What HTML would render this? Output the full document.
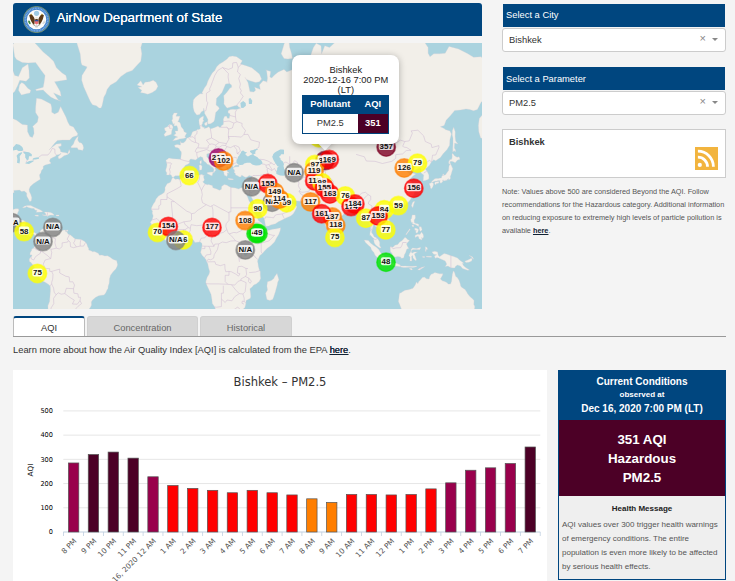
<!DOCTYPE html>
<html><head><meta charset="utf-8"><title>AirNow Department of State</title>
<style>
*{box-sizing:border-box;margin:0;padding:0}
html,body{width:735px;height:581px;overflow:hidden;background:#f4f4f4;font-family:"Liberation Sans",Arial,sans-serif;color:#333}
.abs{position:absolute}
#hdr{left:13px;top:3px;width:469px;height:33px;background:#00467f;border-radius:3px 3px 0 0}
#hdr .t{position:absolute;left:43.5px;top:5.5px;font-size:13.33px;color:#fff;white-space:nowrap;line-height:17px;text-shadow:0 0 0.5px #fff}
#map{left:13px;top:43px;width:469px;height:266px;background:#aad3df;overflow:hidden}
.ml{font:bold 7.9px "Liberation Sans",Arial,sans-serif;fill:#111}
.ax{font:6.6px "DejaVu Sans","Liberation Sans",sans-serif;fill:#000}
.xl{font:7.4px "DejaVu Sans","Liberation Sans",sans-serif;fill:#555}
.ay{font:7.3px "DejaVu Sans","Liberation Sans",sans-serif;fill:#222}
.ct{font:11.55px "DejaVu Sans","Liberation Sans",sans-serif;fill:#333}
#pop{left:279.3px;top:12px;width:107px;height:89px;background:#fff;border-radius:8px;box-shadow:0 1.5px 7px rgba(0,0,0,.28)}
#tip{left:305.5px;top:92.5px;width:12px;height:12px;background:#fff;transform:rotate(45deg);box-shadow:0 1.5px 7px rgba(0,0,0,.25)}
#poptxt{left:279.3px;top:21.5px;width:107px;text-align:center;font-size:9.33px;line-height:10.1px;color:#222}
#ptab{left:288.8px;top:52px;width:87.2px;height:38.6px;border:1px solid #00467f;background:#fff}
.hdbar{background:#00467f;color:#fff;font-size:9.33px;line-height:24.2px;padding-left:3.6px}
.sel{background:#fff;border:1px solid #ccc;border-radius:3px;font-size:9.33px;line-height:22px;padding-left:6px;color:#333}
.tab{top:316px;height:20px;font-size:9.33px;text-align:center;line-height:22px;color:#666;background:#d7d7d7;border:1px solid #d0d0d0;border-bottom:none;border-radius:3px 3px 0 0}
</style></head><body>
<div id="hdr" class="abs">
<svg class="abs" style="left:10px;top:3px" width="27" height="27" viewBox="0 0 27 27">
<circle cx="13.55" cy="13.55" r="13.1" fill="#4382cb" stroke="#9aa456" stroke-width="0.7"/>
<circle cx="13.55" cy="13.55" r="11.3" fill="none" stroke="#7fb0e6" stroke-width="1.6" stroke-dasharray="0.9 0.7"/>
<circle cx="13.55" cy="13.55" r="9.7" fill="#fdfdfb"/>
<circle cx="13.55" cy="7.3" r="2.6" fill="#9fcbe3"/>
<path d="M7.3 8.9 L8.2 7.4 L9.2 8.9Z M17.9 8.9 L18.9 7.4 L19.8 8.9Z" fill="#c9b037"/>
<path d="M6.2 9.3 L7.5 8.6 L9.3 9.1 L11.1 11.4 L11.9 14 L11.6 16 L11.4 18.4 L10.1 18.2 L8.6 16 L7.3 13.2Z" fill="#5c3a17"/>
<path d="M20.9 9.3 L19.6 8.6 L17.8 9.1 L16 11.4 L15.2 14 L15.5 16 L15.7 18.4 L17 18.2 L18.5 16 L19.8 13.2Z" fill="#5c3a17"/>
<path d="M12.3 11.2 Q13.55 10.2 14.8 11.2 L15.2 14 H11.9Z" fill="#efe9dc"/>
<path d="M11.9 13.4 Q13.55 12.6 15.2 13.4 V14.2 H11.9Z" fill="#4a2f14"/>
<path d="M11.8 14 H15.3 V16.6 Q15.3 18 13.55 18.6 Q11.8 18 11.8 16.6Z" fill="#ea6a72"/>
<rect x="11.8" y="14" width="3.5" height="1.3" fill="#2c4f9e"/>
<ellipse cx="6.4" cy="16.4" rx="1" ry="2" transform="rotate(-25 6.4 16.4)" fill="#3f8a3f"/>
<path d="M19.6 17.6 L21.6 14.6 M20.4 18 L22 15.6" stroke="#b9b9b9" stroke-width="0.6" fill="none"/>
<path d="M10.4 18.6 L11.4 19.6 M16.7 18.6 L15.7 19.6" stroke="#5c3a17" stroke-width="0.9"/>
<path d="M11.6 19.6 Q13.55 18.8 15.5 19.6 L14.6 21.6 H12.5Z" fill="#c9c9c9"/>
</svg>
<div class="t">AirNow Department of State</div>
</div>

<div id="map" class="abs">
<svg class="abs" style="left:0;top:0" width="469" height="266" viewBox="0 0 469 266">
<path d="M-19.1,29.9 -11.5,28.9 -9.6,7.7 -4.0,19.4 -0.2,27.4 1.7,32.4 5.5,33.4 9.3,24.8 15.0,21.0 16.0,27.4 16.3,34.9 13.1,38.2 6.8,37.3 4.6,42.8 1.7,48.6 -1.1,50.7 -4.9,54.9 -7.8,60.9 -9.1,64.7 -8.1,69.2 -4.9,75.6 -0.2,75.6 3.6,77.3 9.3,81.4 14.4,82.1 14.6,88.8 16.9,93.5 19.4,94.4 21.1,90.4 20.7,85.6 19.7,83.4 24.5,79.0 25.4,73.9 22.6,69.6 22.6,64.7 23.5,55.3 28.3,56.1 34.0,58.9 37.8,60.9 38.7,64.7 38.7,69.2 41.6,71.0 45.3,69.2 47.6,63.6 51.0,70.3 52.9,73.9 54.8,79.0 56.7,82.4 60.5,84.0 62.4,87.2 64.7,90.4 64.3,92.5 59.6,94.1 56.7,97.1 49.1,97.1 44.4,97.4 41.6,100.3 37.8,105.1 35.9,107.1 39.7,103.7 43.4,100.9 48.2,100.6 48.2,103.1 45.3,103.7 47.2,106.5 47.6,108.7 49.5,109.3 52.9,109.8 54.8,110.6 56.2,106.5 57.1,109.3 54.8,111.4 51.0,112.8 48.2,114.9 45.9,115.9 45.0,113.8 47.6,111.2 48.2,110.1 46.3,111.4 43.4,112.0 42.5,113.3 39.7,114.6 37.4,115.7 36.4,118.0 37.8,119.8 37.8,120.5 34.9,121.3 32.1,122.1 30.2,123.3 30.2,125.5 28.3,127.7 27.9,129.7 26.4,132.1 27.0,134.9 27.3,136.3 24.5,137.9 22.6,139.3 20.3,140.8 17.3,143.5 16.1,146.2 16.3,148.4 17.8,151.4 18.8,154.8 18.2,158.0 16.7,158.4 15.4,156.1 13.7,152.9 13.7,150.1 11.2,148.0 8.7,148.6 6.5,147.1 3.6,147.3 0.8,147.5 1.2,149.7 -1.1,149.7 -4.0,148.8 -7.8,148.8 -9.6,149.9 -13.4,152.3 -14.0,156.5 -14.8,160.7 -15.0,164.2 -13.8,167.5 -11.9,170.5 -9.6,171.7 -8.3,172.5 -4.9,171.7 -2.6,171.3 -1.3,169.3 -0.9,166.8 2.7,165.8 5.3,165.8 5.9,167.3 4.6,169.9 4.0,172.3 3.1,173.9 2.1,176.8 3.2,177.4 7.4,177.0 10.3,177.2 12.7,178.8 12.2,182.7 11.8,186.2 13.1,188.5 14.6,190.0 16.9,190.8 19.2,189.4 21.6,189.6 23.7,191.0 22.8,193.8 21.8,192.1 19.7,190.6 18.2,191.7 18.8,193.5 16.9,193.8 15.6,192.3 13.3,191.9 11.8,191.2 9.3,188.5 7.8,186.8 6.1,184.6 4.6,182.7 2.7,182.3 -0.2,181.3 -3.0,180.7 -5.9,177.8 -8.7,176.4 -11.5,177.4 -15.3,176.4 -19.1,174.9ZM47.8,58.1 45.3,56.9 40.6,49.9 48.2,53.3 47.2,48.6 41.6,38.7 53.9,36.8 52.9,32.4 49.1,29.9 43.4,24.8 40.6,18.3 35.9,13.7 30.2,9.0 24.5,2.7 18.8,-3.2 11.2,-3.2 3.6,-3.8 -0.2,1.5 1.7,13.7 3.6,16.6 9.3,19.4 15.0,19.9 22.6,19.4 28.3,27.4 32.1,32.4 31.1,39.6 30.2,44.2 22.6,46.4 23.5,47.7 26.4,47.3 30.2,46.9 34.0,50.7 37.8,54.1 41.6,56.1 45.3,57.3ZM5.5,47.3 8.4,52.0 13.1,50.7 16.9,49.9 17.8,47.3 15.0,45.5 11.2,41.0 8.7,39.6 6.5,41.9ZM-10.6,7.7 -0.7,6.5 -0.2,-3.8 -10.6,-5.2ZM65.3,93.2 63.4,95.0 61.5,97.9 60.5,100.9 58.0,103.7 58.2,104.8 61.5,104.8 64.3,104.8 65.3,106.8 68.1,107.1 69.6,107.6 70.6,105.1 70.0,102.3 68.5,100.0 66.2,99.4 64.7,97.1ZM66.2,-19.8 60.5,-16.0 64.3,1.5 67.2,10.8 68.1,19.4 69.0,22.1 73.8,23.7 73.8,24.8 69.0,32.4 68.7,37.3 70.9,44.2 72.5,47.7 75.7,54.9 77.6,58.9 79.5,61.7 83.3,62.8 86.1,65.1 88.0,65.1 89.0,62.8 89.9,58.9 90.9,54.1 92.8,50.7 94.1,46.4 97.5,41.9 99.4,41.0 103.2,38.7 107.9,33.4 113.6,29.4 119.3,27.4 123.1,23.2 127.8,18.3 128.8,10.8 127.8,4.6 129.7,-1.8 132.6,-12.3 134.5,-28.0ZM124.0,41.9 127.8,37.8 130.1,41.9 132.0,39.2 136.4,38.7 140.2,37.3 143.0,39.2 144.9,43.3 143.0,46.9 139.2,49.5 134.8,51.2 131.6,50.3 127.5,49.5 128.8,47.3 125.0,44.6 128.8,43.8ZM159.7,97.8 163.9,97.1 166.7,95.9 170.5,95.6 173.2,94.4 171.8,93.5 173.7,90.1 171.1,88.8 170.5,86.6 168.2,83.7 167.5,80.7 166.3,79.0 164.8,79.0 165.8,77.0 166.7,73.9 167.1,73.2 162.9,73.2 164.4,69.9 161.0,69.9 159.5,72.8 159.7,76.3 158.7,77.0 160.1,81.1 159.7,81.4 161.4,80.4 161.0,83.0 163.9,82.7 164.8,85.6 164.8,87.9 162.0,87.9 162.5,89.4 162.9,90.7 160.6,92.2 163.9,93.8 164.8,94.1 162.5,94.7ZM158.4,91.3 158.7,87.9 160.1,84.0 158.7,81.7 156.3,81.4 154.4,83.7 151.5,85.0 151.9,87.6 153.4,88.5 151.0,91.6 151.9,93.5 154.8,92.5ZM219.4,13.1 223.6,13.7 229.3,17.7 227.4,21.0 233.1,22.7 238.8,24.8 246.4,31.0 248.6,35.9 246.4,38.7 242.6,39.6 236.9,37.8 233.1,36.3 232.1,34.4 235.0,39.6 236.5,46.4 236.9,48.6 240.7,49.0 242.6,47.3 241.6,44.2 246.4,46.0 247.3,46.4 246.4,41.9 250.1,37.8 253.9,38.7 253.9,39.6 254.5,34.9 253.6,27.4 252.6,26.9 257.7,28.4 256.8,33.9 258.7,34.9 261.5,32.0 265.3,28.9 271.0,26.4 273.8,28.9 278.6,26.9 282.4,25.3 285.2,20.5 286.2,23.2 292.8,25.3 295.7,25.3 297.6,22.1 297.6,25.8 300.4,28.4 301.3,24.8 297.6,19.4 297.2,13.7 300.4,4.6 303.2,0.2 308.0,2.7 308.6,10.8 311.8,2.7 316.5,4.6 323.2,-1.8 331.7,-12.3 360.1,-36.7 384.8,-5.2 384.8,-1.8 394.3,-0.5 403.7,-1.8 411.3,-1.2 415.1,4.6 415.1,10.2 417.0,13.7 420.8,10.8 426.5,10.8 432.2,10.2 436.0,3.4 445.5,5.9 454.9,10.8 460.6,14.3 468.2,13.7 473.9,21.0 483.4,44.2 483.4,97.9 467.7,95.0 465.8,88.8 465.4,82.4 466.3,75.6 469.2,72.1 473.9,64.7 479.6,58.9 473.9,57.7 468.2,58.9 464.4,66.6 460.6,67.7 456.8,66.6 453.0,65.9 447.4,67.0 441.7,67.4 436.9,73.2 433.1,77.3 431.2,82.4 427.4,83.7 431.2,85.6 432.2,86.6 436.9,87.9 438.4,91.0 436.9,96.5 436.6,102.3 434.1,106.5 430.3,110.6 427.4,114.6 422.7,117.7 420.8,116.7 418.3,119.0 416.5,122.3 413.8,124.8 412.3,126.0 414.2,128.5 415.9,132.1 415.9,135.6 415.1,136.5 412.3,137.4 410.2,137.9 410.4,134.4 410.8,132.1 408.1,130.1 407.5,128.0 408.3,126.0 406.4,124.8 401.8,127.3 401.1,127.5 400.9,125.5 401.8,123.3 400.0,122.6 397.1,125.3 394.3,126.8 393.7,128.5 395.8,130.1 396.2,131.6 399.4,130.1 402.8,131.1 400.0,133.0 398.6,134.4 396.7,136.7 398.6,139.0 399.8,142.0 401.7,144.2 401.7,146.0 400.0,146.6 399.8,147.3 401.8,148.2 401.1,151.2 399.2,153.4 397.5,156.5 396.2,158.2 394.3,159.9 391.8,162.2 387.2,163.8 385.7,164.4 382.5,165.6 379.9,166.2 379.5,168.3 378.7,166.0 376.2,165.4 374.4,166.2 372.8,167.9 371.1,170.3 371.1,171.9 372.8,174.3 375.9,176.8 377.6,179.8 378.0,183.1 377.6,185.4 375.3,186.9 373.4,187.7 372.8,189.4 370.0,191.0 369.2,191.2 369.6,188.5 368.3,187.5 366.8,187.3 365.6,185.2 364.3,184.2 362.0,183.3 361.8,181.9 361.1,181.7 360.1,182.3 360.1,184.6 359.2,186.6 358.6,188.5 358.8,190.0 360.1,191.4 361.1,193.8 363.0,194.6 364.5,195.7 366.2,198.0 366.8,199.9 366.6,202.2 368.1,204.9 366.8,205.0 364.9,203.7 362.6,202.0 361.3,199.9 360.7,197.1 360.7,195.4 359.6,194.6 357.3,191.9 356.9,192.5 356.9,190.4 357.5,187.5 357.7,184.6 356.7,181.7 356.3,179.8 355.8,176.8 354.8,175.4 354.1,174.5 352.5,175.8 351.2,177.2 349.3,176.8 349.7,173.9 349.1,171.3 347.8,169.3 346.5,168.3 345.5,166.8 344.6,164.2 343.1,163.6 342.1,164.6 339.6,165.2 337.8,165.4 335.5,166.0 335.1,167.7 334.3,168.9 332.1,169.7 329.8,171.9 326.6,174.9 324.5,176.4 322.6,177.4 322.2,179.8 322.8,182.3 321.8,185.0 322.0,187.9 320.9,188.1 320.1,189.8 318.8,190.8 317.5,192.1 315.6,190.4 315.0,188.5 314.0,185.6 312.3,182.7 311.6,179.8 310.4,177.8 309.3,174.9 308.6,170.9 308.4,167.9 308.2,165.8 307.6,166.8 305.1,167.3 303.2,166.8 301.3,164.2 303.8,163.0 301.2,162.2 299.8,161.3 298.1,159.7 296.8,157.8 292.8,158.0 288.1,158.2 284.3,158.0 281.4,157.4 279.2,156.5 278.2,154.4 277.3,154.0 274.8,155.1 272.0,154.8 270.1,153.4 267.2,151.2 266.3,148.4 264.4,147.5 263.0,147.3 261.5,148.4 261.5,149.5 262.8,152.3 264.9,154.8 265.7,155.9 266.3,157.8 266.8,159.0 267.6,156.5 268.3,158.6 267.8,160.1 270.1,160.3 272.9,160.3 275.4,158.0 277.1,156.1 277.5,158.6 278.0,160.1 281.6,161.5 283.9,163.8 282.0,167.9 280.1,170.9 277.6,172.9 275.4,173.9 272.9,174.9 269.5,176.8 265.3,178.8 262.5,180.7 257.7,181.9 255.8,183.1 253.0,183.3 252.4,182.1 252.0,179.8 251.7,177.8 251.3,175.8 249.2,172.9 247.9,169.9 244.8,166.2 243.5,162.8 241.2,159.7 239.7,156.5 237.4,152.3 236.7,152.1 236.9,149.0 235.7,152.3 233.6,151.2 232.3,148.2 233.1,151.2 234.6,154.0 235.9,157.6 237.8,160.7 238.2,162.8 240.7,166.8 241.2,169.7 243.5,172.9 245.4,177.6 248.2,179.8 251.1,182.7 252.6,183.7 252.4,185.6 253.9,187.5 256.8,187.1 259.6,186.2 263.4,185.8 267.6,184.8 267.2,187.5 265.7,191.4 263.4,195.2 261.5,199.0 257.7,202.8 256.4,203.7 253.9,205.6 251.1,208.4 249.2,210.7 246.9,212.6 245.8,215.1 244.5,217.9 245.0,220.4 245.4,223.6 246.4,227.1 247.3,228.4 247.3,232.3 247.7,235.2 246.4,238.2 243.5,240.7 240.7,242.1 239.1,244.1 236.9,245.7 237.4,249.2 237.8,253.3 237.4,255.3 233.1,257.4 232.9,260.6 231.9,264.4 229.3,267.0 227.4,270.3 227.4,278.3 202.7,278.3 202.7,267.0 201.8,264.0 199.3,260.6 198.9,256.4 198.0,251.2 196.1,247.1 194.2,243.1 192.9,240.1 192.9,238.2 194.2,234.3 196.1,231.1 196.7,228.4 195.5,224.6 194.8,220.8 193.8,218.9 192.9,216.4 191.4,214.7 189.1,212.2 187.6,209.4 188.3,206.7 188.7,204.7 189.1,202.2 188.9,200.3 187.2,199.0 186.2,199.0 183.8,199.2 181.9,199.4 180.4,197.1 178.8,195.6 176.9,195.4 174.3,195.6 172.8,195.9 170.5,196.9 166.7,198.4 164.8,197.8 162.9,197.5 159.1,198.2 156.3,199.2 153.4,198.0 150.0,195.6 148.7,194.4 146.8,193.3 145.5,191.4 145.3,189.8 144.5,189.4 142.6,187.1 141.7,186.2 138.8,183.9 138.6,182.1 138.3,180.7 137.3,179.4 139.2,176.8 140.2,172.9 139.2,169.9 139.6,167.9 138.3,166.8 138.5,164.8 140.2,161.3 142.1,158.6 143.0,156.1 145.5,152.9 148.7,151.2 151.2,149.5 152.1,146.9 151.9,144.7 153.1,142.4 154.4,140.6 156.1,139.9 157.6,139.0 158.7,136.3 159.3,134.9 160.4,134.6 162.0,136.3 164.8,136.0 166.7,136.5 168.6,135.1 170.5,134.4 173.3,133.0 176.2,132.5 180.0,132.5 182.8,132.1 185.7,132.3 189.1,131.3 190.0,132.5 191.4,132.1 190.6,133.7 190.8,135.1 191.4,136.7 190.8,137.9 189.7,139.0 191.0,139.9 191.7,140.8 194.2,141.7 195.5,141.5 199.3,142.6 199.9,144.7 203.7,146.0 206.5,147.3 208.4,146.2 208.6,143.5 211.3,141.5 214.1,142.2 216.0,143.5 217.9,144.4 222.3,144.9 225.5,146.0 227.2,145.3 229.3,144.4 231.8,145.1 234.0,145.5 235.5,145.1 236.3,143.5 236.9,141.3 237.8,139.3 238.4,137.7 238.6,135.6 238.8,133.7 239.1,133.0 237.8,133.0 236.1,132.5 234.2,133.9 232.1,134.2 229.3,132.5 228.5,132.3 228.1,133.7 226.6,133.9 224.5,132.8 222.6,132.1 222.3,130.4 220.8,128.9 221.7,128.5 221.3,126.8 220.2,126.0 220.2,124.8 222.6,123.8 225.5,123.8 226.4,122.8 225.5,122.1 225.3,122.3 222.6,122.3 221.1,123.6 220.2,124.6 219.8,123.3 219.8,122.8 217.9,122.6 216.0,122.8 216.8,124.3 216.6,124.6 214.9,124.3 214.1,123.6 213.4,124.8 214.1,126.5 214.3,127.3 213.9,128.0 216.0,129.7 216.1,130.4 215.1,129.7 214.1,129.9 214.5,131.1 214.1,133.2 213.2,133.2 212.2,132.5 211.6,132.5 210.9,130.4 210.9,129.2 210.5,128.7 209.8,127.5 208.8,125.8 208.2,125.0 207.3,124.1 207.3,121.3 206.9,119.8 205.6,118.8 203.7,117.2 201.6,115.9 199.3,114.1 198.8,112.0 197.6,111.2 196.7,112.5 196.3,110.3 193.8,110.9 193.8,113.8 194.4,114.6 196.3,115.9 197.4,118.5 199.3,120.0 201.2,120.0 200.7,121.1 202.7,122.1 205.6,124.6 205.2,125.3 203.1,123.6 202.0,125.3 202.9,127.3 202.0,128.0 201.0,129.7 200.3,129.9 200.5,128.2 201.0,126.8 200.1,124.8 198.8,124.1 197.8,123.3 197.2,122.8 196.1,121.8 194.4,121.3 193.6,120.3 192.5,119.0 191.4,118.5 190.4,117.2 190.0,115.9 189.7,114.6 188.5,114.1 187.4,113.6 186.0,114.6 184.7,115.1 183.6,116.2 182.3,117.0 180.6,116.4 179.0,116.2 177.7,115.9 176.4,117.2 176.4,118.8 176.6,120.0 174.7,121.3 172.4,122.3 171.8,123.3 170.5,125.0 169.9,126.3 170.9,128.0 169.6,128.9 169.2,130.6 167.1,132.1 166.3,132.8 163.9,132.8 162.2,132.8 160.4,134.2 159.9,134.4 158.6,133.2 158.4,132.3 157.2,131.6 155.5,132.1 153.6,132.1 153.8,129.7 152.7,128.0 152.9,126.3 153.6,124.3 154.0,121.8 153.6,119.5 152.9,117.2 154.8,115.9 155.9,115.1 159.5,115.7 163.3,115.9 167.1,116.2 167.7,115.9 168.0,113.3 168.4,110.6 168.2,108.7 166.7,107.1 166.3,105.7 164.8,104.8 162.3,104.3 161.4,102.6 162.9,101.7 164.8,101.4 166.7,102.0 167.5,102.0 167.5,99.1 166.9,98.8 168.0,98.8 168.4,100.0 170.7,99.7 172.6,97.9 173.5,95.9 174.1,95.0 175.2,94.7 176.6,94.1 177.3,93.8 178.3,91.9 179.4,89.1 180.7,88.2 183.6,87.6 184.2,86.6 185.9,86.6 186.8,86.0 187.4,85.3 186.8,82.7 186.2,80.7 185.9,77.0 186.8,75.3 189.3,73.5 190.6,73.2 190.4,74.9 190.0,77.0 191.2,77.7 189.8,78.7 189.5,80.7 188.7,81.7 189.1,83.0 189.8,84.3 191.4,84.3 191.2,85.6 193.4,85.0 195.9,83.7 197.4,86.0 201.2,84.7 205.2,83.0 206.0,84.3 207.7,84.3 208.4,82.7 210.3,81.4 210.5,79.0 210.3,76.3 211.5,73.5 213.4,73.0 214.5,75.3 216.2,75.3 216.8,72.4 217.0,70.7 215.1,69.9 215.1,67.7 217.5,66.6 219.8,66.2 223.6,66.6 227.8,65.1 225.5,64.0 224.5,62.5 221.7,62.8 217.9,64.0 214.1,65.1 212.6,63.2 210.9,60.9 211.1,56.9 210.7,52.8 213.7,49.5 217.0,45.1 218.7,44.2 218.5,41.9 216.4,40.6 212.6,41.0 210.9,45.1 209.0,49.5 205.6,53.3 203.5,55.3 203.1,60.9 203.1,62.1 205.6,64.0 206.3,65.5 204.8,67.4 202.7,69.6 202.2,72.8 201.6,76.7 200.7,78.7 197.6,80.7 195.2,81.1 195.0,80.4 194.6,78.4 195.0,76.7 193.3,73.2 191.7,70.7 191.5,68.5 190.8,65.1 190.4,67.7 188.5,68.8 186.6,71.4 183.8,72.1 181.3,68.8 180.2,64.7 180.0,60.9 180.4,56.9 182.3,54.5 184.7,52.4 187.0,50.7 190.2,50.7 188.9,49.9 191.4,45.1 193.6,41.9 194.8,38.2 197.0,33.9 199.3,29.9 201.8,27.4 203.7,23.7 206.5,21.0 210.3,18.8 214.1,16.0 216.0,13.7ZM9.5,165.0 11.2,163.2 14.2,162.4 17.8,162.6 20.7,164.0 23.5,165.2 27.0,166.8 29.8,168.5 28.3,169.1 23.2,169.2 24.1,167.5 22.0,167.1 21.1,165.6 18.0,165.2 15.4,164.4 13.5,163.6 12.2,164.4ZM29.2,172.1 31.3,172.5 34.0,172.7 34.5,173.5 35.7,172.5 37.8,172.1 40.8,172.3 41.0,171.7 39.7,170.5 37.8,169.5 34.5,169.1 32.4,169.1 31.3,169.3 32.4,170.3 33.2,171.7 31.1,171.9 29.4,171.7ZM21.8,172.3 24.5,171.9 26.0,172.9 24.5,173.3 22.2,172.9ZM43.1,171.9 46.1,172.1 45.9,172.9 43.1,172.9ZM53.1,188.3 54.8,188.3 55.0,186.9 53.5,187.1ZM23.7,191.0 24.9,192.3 25.8,190.4 27.1,189.4 27.3,187.7 28.7,186.6 29.8,186.0 32.1,185.6 33.6,184.6 35.3,183.9 35.5,184.6 34.2,186.0 34.7,186.8 35.9,186.6 37.4,185.6 37.8,184.2 38.3,185.6 40.8,186.2 41.2,187.3 43.4,187.3 45.3,187.3 47.2,188.3 49.1,187.5 51.0,187.1 53.1,187.1 52.0,188.1 53.9,188.9 55.2,191.2 57.1,191.7 59.6,193.8 60.3,194.6 62.4,196.1 65.8,196.3 68.1,196.5 71.3,198.2 72.7,199.4 73.8,200.9 74.7,203.7 75.7,205.6 75.7,207.1 78.5,208.1 79.5,208.8 81.4,208.6 85.2,210.3 86.5,212.2 89.0,212.0 91.8,213.0 94.6,212.8 97.5,214.5 99.8,216.2 102.2,217.2 103.6,217.4 104.1,219.8 104.5,221.2 104.3,222.9 102.8,225.9 100.3,228.4 97.5,232.3 96.5,235.8 96.2,240.1 95.2,243.1 95.0,245.5 94.1,246.7 92.8,249.8 91.0,252.0 88.6,252.2 85.7,252.8 82.7,254.3 79.5,257.0 78.3,258.9 78.5,261.9 77.6,264.0 75.7,266.6 75.1,269.2 73.8,273.7 34.9,273.7 35.1,267.0 34.9,262.7 36.6,258.5 37.0,253.3 37.4,248.2 37.4,246.1 37.2,243.1 35.3,241.3 33.0,239.8 30.2,238.2 27.9,236.8 26.0,234.3 24.9,231.3 24.1,230.4 22.6,227.1 21.5,224.6 19.7,221.7 17.8,219.3 16.5,218.5 16.3,216.0 17.8,214.1 18.8,213.2 19.0,211.9 16.9,211.7 17.3,209.4 18.6,207.5 18.8,206.0 20.7,205.2 21.1,204.1 23.0,202.6 23.9,200.5 23.5,198.0 23.7,195.7 22.8,193.8ZM264.0,230.4 265.9,236.8 264.7,239.2 264.2,242.1 262.5,248.2 260.6,254.3 259.6,256.4 256.8,257.4 253.9,256.4 253.2,253.1 252.6,250.2 254.5,247.1 253.9,243.1 254.5,238.8 258.3,237.6 260.6,235.8 261.9,233.3ZM322.2,188.9 324.5,191.4 325.8,193.8 325.4,195.4 323.3,196.3 322.2,195.7 321.8,194.2 321.8,191.9ZM437.7,121.1 438.8,123.6 439.8,125.8 438.8,128.9 437.9,132.1 437.1,133.9 437.7,135.1 436.6,136.5 435.8,137.0 435.4,135.6 434.5,136.3 433.9,137.7 433.1,136.7 432.6,137.7 430.3,137.7 430.1,136.7 429.5,137.9 430.1,138.3 428.8,139.5 428.0,140.3 426.7,139.3 426.9,138.3 427.3,137.7 425.6,137.4 423.7,138.1 421.6,138.3 419.9,139.0 418.9,139.1 418.7,138.3 419.9,137.4 421.8,135.8 423.1,135.5 425.2,135.5 427.1,135.1 428.4,135.1 428.6,133.7 429.7,132.5 429.9,131.1 430.9,130.9 430.3,132.5 432.6,131.8 433.7,130.1 435.6,127.5 435.8,125.0 436.0,123.3 436.6,121.8ZM418.7,139.3 420.2,139.9 420.6,141.3 419.9,143.5 418.9,145.3 418.3,145.8 417.4,145.1 417.4,143.5 416.6,142.0 416.3,140.6 417.8,139.9ZM425.7,138.6 425.9,139.5 425.0,140.6 423.7,140.2 422.7,142.0 421.6,140.4 422.1,139.0 423.7,138.8ZM436.0,121.1 437.9,120.5 436.6,119.0 437.9,118.3 439.8,118.5 442.2,119.8 444.3,117.2 447.0,116.2 446.0,113.8 444.1,114.3 441.7,113.0 439.8,110.6 439.0,110.9 439.2,113.3 439.0,115.1 438.4,116.4 436.9,116.4 435.6,119.0ZM440.7,84.3 442.2,88.8 442.1,93.5 442.6,97.9 444.9,100.9 441.7,100.0 441.3,105.1 442.6,107.1 442.4,109.0 441.1,107.6 439.8,109.3 439.8,105.1 440.0,100.9 440.0,95.0 439.2,91.9 439.4,87.6ZM400.9,158.2 401.8,158.6 400.9,160.7 399.8,164.8 398.4,162.8 399.4,159.7ZM380.4,168.7 381.0,169.7 380.0,171.3 378.3,172.5 376.6,171.9 376.4,170.3 377.8,169.1ZM399.2,171.9 402.2,171.9 402.4,174.9 401.1,177.2 401.3,179.8 402.8,180.4 405.6,181.1 405.8,183.5 404.3,182.7 402.8,181.7 401.3,181.3 399.2,180.9 399.8,179.8 398.2,179.2 397.7,176.4 398.6,175.6 398.8,173.9ZM408.5,188.9 410.2,191.4 410.6,193.7 409.8,195.6 408.7,194.2 408.9,196.9 406.0,195.7 405.6,193.8 404.5,193.3 402.0,194.4 402.2,192.3 404.7,191.2 407.0,191.4ZM406.2,183.7 408.1,183.7 409.1,186.6 407.9,188.3 407.0,188.1 406.4,186.0ZM401.8,185.0 404.1,185.6 405.6,186.6 404.9,189.3 403.7,190.2 402.6,189.1 403.4,187.5 401.8,187.3ZM392.7,191.6 393.3,191.7 397.3,186.2 396.7,185.8ZM398.8,181.9 400.7,182.1 400.5,184.0 399.8,184.0ZM377.4,203.7 378.3,203.7 379.7,204.3 381.4,203.0 381.7,202.2 384.8,201.4 386.7,199.0 388.6,198.0 390.5,196.1 392.0,194.2 393.7,195.6 394.5,196.4 396.5,197.6 394.8,199.2 393.5,200.9 394.3,203.1 395.8,205.6 393.9,206.0 393.3,207.5 392.7,209.4 391.4,211.7 390.9,214.1 390.5,215.1 387.8,215.3 387.8,214.1 384.8,213.6 382.5,214.1 379.5,213.0 379.1,210.5 377.4,208.4 377.2,205.8 377.2,204.7ZM351.2,196.9 355.4,197.6 357.7,200.3 360.7,202.6 363.4,204.3 365.8,206.4 366.8,208.4 368.7,210.9 371.5,212.8 371.3,216.0 371.1,218.5 368.9,218.5 365.8,216.0 364.5,214.7 362.0,212.2 360.9,209.4 358.6,206.9 357.7,204.3 355.4,202.2 352.5,199.5ZM370.0,220.4 371.5,218.7 373.0,219.1 375.9,219.4 376.4,220.2 379.9,220.6 381.0,219.6 384.0,220.6 387.4,222.1 387.4,223.8 384.8,223.3 381.0,223.1 377.2,222.1 374.7,222.1 372.3,221.3ZM387.6,222.9 390.5,223.1 392.4,222.9 396.2,223.3 400.0,223.3 403.7,223.1 403.7,223.8 400.0,224.4 396.2,224.2 392.4,224.6 390.5,224.4 387.8,224.0ZM404.7,227.1 406.6,225.0 411.9,223.4 410.4,224.6 406.6,226.9ZM396.2,225.6 398.4,225.2 399.6,226.5 398.1,226.9ZM397.7,209.0 398.2,206.2 399.6,205.0 403.7,205.6 407.2,204.5 407.9,204.7 406.6,206.7 403.7,206.6 400.0,206.6 398.4,207.5 398.2,209.2 399.5,210.1 401.1,209.0 404.5,209.0 403.4,209.6 401.3,211.1 402.4,213.7 402.8,214.9 403.4,216.4 403.0,217.7 401.3,216.6 400.0,214.7 399.8,212.6 398.6,213.0 398.8,216.6 398.8,218.1 396.9,217.9 397.1,214.1 395.8,212.8 396.7,210.3ZM412.3,203.7 413.2,204.1 414.2,204.7 414.6,206.6 413.2,206.6 413.0,209.0 412.3,207.5 412.5,205.6ZM413.2,213.2 418.5,213.2 418.5,214.3 413.2,214.1ZM409.4,213.4 411.7,213.6 411.5,214.7 409.6,214.3ZM418.9,209.0 421.8,208.3 424.6,209.0 425.2,212.2 426.5,213.7 429.3,211.7 431.2,210.5 434.1,211.3 437.3,212.4 440.7,213.6 444.5,214.9 447.0,217.4 449.3,218.9 450.8,220.2 449.3,220.4 450.6,222.7 451.7,223.8 453.0,224.8 456.5,227.1 454.6,227.3 449.6,225.6 447.4,222.9 444.5,222.1 442.6,223.3 441.7,225.0 437.9,224.8 435.0,223.1 432.2,223.4 433.7,221.2 433.1,219.8 432.2,217.9 428.4,216.2 425.6,215.1 424.0,214.5 422.3,215.3 421.4,213.0 422.7,212.2 423.7,211.7 420.8,211.3 419.9,210.3ZM451.7,218.3 454.9,217.0 457.8,215.5 459.3,215.6 458.7,217.9 455.9,219.3 453.0,219.4ZM456.5,212.4 459.7,214.1 460.6,216.2 460.1,216.0 457.8,213.6 456.3,212.8ZM388.6,278.3 388.4,266.0 387.8,264.4 386.7,261.6 385.4,258.5 385.9,255.3 386.3,251.4 386.9,249.8 387.8,250.0 389.5,248.8 392.0,247.3 395.4,246.7 397.7,246.1 400.0,245.3 402.2,242.1 403.2,239.8 403.6,239.0 404.9,240.7 405.6,238.8 407.5,236.8 409.4,234.6 411.3,234.1 413.6,235.8 416.1,236.0 416.5,233.9 417.4,232.3 418.5,231.1 419.9,230.8 421.8,229.4 423.7,230.0 426.5,230.8 429.9,230.8 429.3,232.7 428.2,234.6 427.4,236.0 429.3,237.8 431.8,238.6 434.5,240.1 435.0,241.1 437.5,241.1 438.6,238.2 439.0,234.3 439.4,231.3 440.2,228.4 440.7,227.9 441.7,230.0 442.6,233.3 444.5,234.8 446.0,237.2 447.0,239.9 447.7,243.1 448.9,244.5 452.1,246.5 453.4,248.6 454.8,251.0 456.5,253.1 457.4,254.1 459.7,256.0 461.0,257.4 460.8,261.6 461.6,263.1 461.8,264.0 461.2,267.0 460.6,278.3ZM268.2,10.8 271.0,15.4 274.8,16.0 279.5,15.4 278.6,10.8 276.7,4.6 276.1,-0.5 280.5,-5.2 286.2,-16.0 299.4,-28.0 295.7,-32.2 280.5,-19.8 272.9,-5.2 270.1,4.6ZM194.0,129.7 195.9,129.2 200.1,128.9 199.1,132.8 198.0,132.5 194.2,130.6ZM187.9,121.8 189.1,123.6 188.7,126.8 187.6,127.0 186.4,127.3 186.4,124.1 186.0,122.6ZM188.3,117.2 188.5,119.3 187.9,121.3 186.8,119.8 187.0,118.3ZM215.1,135.3 220.4,136.0 220.2,136.7 217.0,136.7 215.1,136.3ZM231.8,136.7 233.1,137.7 235.0,136.7 236.1,135.1 234.0,135.8 232.9,136.3ZM191.5,80.1 194.4,78.7 194.2,81.7 192.9,82.7 191.7,81.7Z" fill="#f2efe9" stroke="#d9cfd6" stroke-width="0.3"/>
<path d="M0.8,103.7 2.9,102.9M9.7,107.9 12.2,109.0 14.1,111.2 14.2,117.2 12.9,119.5M20.7,117.7 20.5,116.2M25.6,114.3 28.8,112.0 34.9,112.0 37.2,109.3 39.3,105.4 41.9,106.2 41.9,110.1 43.4,112.0M-4.3,179.8 -3.0,176.8 -0.9,176.8 -2.8,174.5 1.5,173.3 1.5,177.0 3.1,177.4M1.5,173.3 3.1,171.9M3.2,177.4 1.2,180.0 -0.4,181.1M1.2,180.0 4.0,181.9M4.2,182.7 6.1,182.1 9.3,179.8 12.7,178.8M8.0,186.4 11.8,186.8M13.3,191.9 13.9,189.4M34.5,169.5 34.3,172.9M35.3,184.6 33.0,186.6 32.1,190.0 33.4,193.3 37.8,194.2 42.5,195.7 41.9,199.9 43.4,205.2M43.4,205.2 37.8,206.4 38.7,209.4 37.8,215.5M37.8,215.5 34.0,212.2 30.2,209.4 27.7,207.7M27.7,207.7 23.5,206.7 21.1,204.9M27.7,207.7 27.3,210.3 22.6,213.6 20.7,217.0 18.2,215.8 18.2,213.9M37.8,215.5 32.1,217.0 30.2,221.3 32.4,225.4 36.6,225.6 36.8,228.4 38.7,228.4M38.7,228.4 40.0,231.3 39.7,236.2 38.7,239.2 38.7,241.1M38.7,241.1 37.0,242.7M38.7,241.1 40.6,245.1 41.2,249.2 43.1,251.8M38.7,228.4 46.7,226.1 46.7,230.0 52.9,233.3 56.2,233.9 56.7,238.8 59.9,238.8 61.5,242.1 60.5,245.7M60.5,245.7 53.3,245.3 51.8,250.6M51.8,250.6 48.2,251.2 45.3,249.8 43.1,251.8M43.1,251.8 40.6,255.3 40.8,260.6 38.1,264.9 37.8,269.2M60.5,245.7 60.9,250.2 64.9,250.8 65.4,254.3 67.5,254.3 67.0,257.6M51.8,250.6 56.7,254.3 61.3,257.2 59.4,261.0 64.3,261.2 67.0,257.6M67.0,257.6 68.5,260.6 64.9,263.4 61.3,267.5 60.5,269.2M43.4,205.2 46.3,206.0 49.1,203.7 49.1,199.9 54.8,199.0 55.4,197.6M55.4,197.6 54.1,196.1 56.7,191.4M55.4,197.6 57.1,199.0 57.5,203.7 60.5,204.7 63.4,203.9M62.0,196.1 61.8,198.0 60.5,199.9 61.5,201.3 63.4,203.9M63.4,203.9 67.2,203.1M68.1,196.5 67.3,199.0 67.2,203.1M67.2,203.1 70.6,203.1 72.5,199.5M217.9,144.4 217.9,164.8M217.9,164.8 240.5,164.8M217.9,164.8 217.9,168.9 216.0,168.9 216.0,169.9M216.0,169.9 200.8,161.7 198.9,162.8 197.4,163.6M197.4,163.6 193.3,161.7M193.3,161.7 189.5,159.7 188.5,155.5 189.3,151.6 188.5,147.5M188.5,147.5 190.0,144.2 192.3,140.8M188.5,147.5 186.2,142.4 184.7,139.5 186.2,136.7 186.8,132.3M193.3,161.7 184.7,167.3 181.5,170.1 178.5,170.7M178.5,170.7 176.6,169.3 173.9,168.3 161.4,158.6M161.4,158.6 154.0,153.8M154.0,153.8 154.0,150.8 163.7,145.8 168.2,143.1 167.1,137.2 166.3,136.5M154.0,153.8 154.0,156.5 147.7,156.5 147.7,161.7 145.8,162.8 145.8,166.2 138.3,166.2M161.4,158.6 158.2,158.6 160.1,177.8 148.7,177.8 147.4,179.2M139.2,176.8 144.0,175.6 147.4,179.2M178.5,170.7 178.5,176.8 177.1,178.0 170.9,178.8M170.9,178.8 166.7,180.4 162.0,182.7 160.1,185.6 160.1,187.7M160.1,187.7 155.3,188.1M155.3,188.1 153.4,184.0 148.9,184.2M148.9,183.9 147.4,179.2M198.9,162.8 199.9,166.8 200.1,175.2 196.1,180.7 196.3,181.3M196.3,181.3 189.5,182.1 183.8,182.7 178.1,181.7 177.3,185.2M216.0,169.9 216.0,177.4 213.2,180.7 212.8,183.3 213.9,186.6M164.8,197.8 165.2,193.3 165.4,189.4 165.2,186.6M172.8,195.9 171.4,193.3 170.9,189.4 170.5,186.6M173.5,195.7 173.5,190.4 172.0,187.5 172.2,186.6M175.6,195.4 175.6,190.4 177.3,187.5 177.3,185.2M160.1,187.7 162.0,189.1 165.2,189.1M165.2,186.6 170.5,186.6 172.2,186.6M172.2,186.6 175.1,184.6 174.7,183.5 172.2,181.7 170.9,178.8M175.1,184.6 177.3,185.2M156.3,199.2 154.6,195.2 154.8,193.1M154.8,193.1 155.9,191.6 155.3,188.1M154.8,193.1 152.7,193.5 151.0,191.4M148.7,194.4 150.4,192.7 151.0,191.4M151.0,191.4 150.2,189.8 149.3,188.5 146.8,188.7 145.3,190.2M148.9,183.9 144.5,183.5 144.5,185.2 142.1,186.6M138.8,183.9 142.1,183.5 144.5,183.5M138.6,182.5 142.1,182.3 144.3,181.9 142.1,181.3 139.0,181.5M186.6,198.8 188.1,195.2 191.9,194.8 194.6,191.0 196.7,186.6 198.2,183.3 197.2,182.5M198.2,183.3 198.9,186.6 199.9,188.5 197.0,188.9 199.3,193.3M199.3,193.3 205.8,192.3 206.5,190.4 210.3,189.4 213.9,186.6M213.9,186.6 215.4,190.4 218.5,192.9 222.5,197.8M222.5,197.8 217.9,198.0 213.2,199.7 209.4,199.0 205.8,200.9M205.8,200.9 201.8,201.1 201.0,203.3M201.0,203.3 198.0,198.0 199.3,193.3M189.1,203.1 195.7,203.3 201.0,203.3M189.1,205.6 191.9,205.6 191.9,203.3M191.5,214.9 193.3,211.9 197.8,211.3 197.8,208.4 196.7,204.9 195.7,203.3M205.8,200.9 204.4,206.6 201.2,211.7 200.7,215.1 197.8,216.8 195.2,216.2 193.6,218.5M194.2,218.9 202.0,218.7 202.7,221.3 207.3,222.7 211.8,221.3 212.0,225.9 212.8,228.8 216.0,228.4 216.0,232.3M216.0,232.3 212.2,232.3 212.2,238.6 214.9,241.3M216.0,228.4 218.5,228.8 222.6,231.0 225.5,233.1 227.0,230.8 224.4,230.0 224.7,225.6 225.3,223.6 228.9,223.3M226.4,218.9 225.9,214.1 226.1,210.3 227.0,207.7 227.4,205.2 229.9,203.3 228.9,200.9 226.4,199.2 222.5,197.8M228.9,200.9 235.0,199.5 238.6,198.8M238.6,198.8 236.9,197.1 233.1,192.3 235.0,189.4M216.0,191.0 220.8,189.4 223.6,189.8 227.4,188.1 231.8,185.2 233.5,187.1 235.0,189.4M235.0,189.4 235.5,187.3 236.9,185.0 239.0,183.3 239.5,180.2M239.5,180.2 240.7,174.9 243.7,172.9M239.5,180.2 242.6,179.4 246.4,180.0 250.9,183.7M250.9,183.7 249.8,186.6 252.0,186.8M252.0,186.8 252.4,185.6M252.0,186.8 252.0,189.4 255.8,191.2 259.6,192.3 261.5,192.3 255.8,198.0 250.1,199.5 248.2,200.1M248.2,200.1 244.5,200.9 238.8,199.0 238.6,198.8M248.2,200.1 248.2,209.0 249.4,210.7M235.0,199.5 235.9,205.2 235.0,207.5 234.8,209.4M234.8,209.4 241.8,213.2 242.0,214.1 244.8,216.4M234.8,209.4 228.3,209.4 226.6,210.1M228.3,209.4 228.9,212.0 225.9,212.6M228.9,212.0 228.1,214.1 228.9,215.6 226.4,215.8M247.1,227.5 242.6,229.0 236.9,229.6 236.1,229.4M228.9,223.3 232.9,225.4 235.0,225.6M232.9,225.4 233.6,231.3 232.5,233.5 227.8,236.0 228.1,237.4M232.5,233.5 235.9,235.2 238.4,238.2 237.2,240.3 235.5,238.6 235.9,235.2M228.1,237.4 225.3,238.2 221.7,242.1 218.5,241.7M228.1,237.4 233.1,239.6 232.7,244.1 232.1,248.8 229.9,251.0M218.5,241.7 222.8,247.1 226.3,250.6 229.9,251.0M229.9,251.0 231.2,255.3 231.2,258.5 232.9,260.2M231.2,258.5 229.3,258.1 228.9,260.2 231.0,261.2M192.9,240.7 197.0,240.9 205.4,240.9 214.9,241.3 218.5,241.7M210.3,242.7 210.3,250.2 208.4,250.2 208.4,256.0 208.4,263.6M208.4,256.0 212.2,259.5 214.1,257.0 218.9,257.8 221.7,253.7 226.3,250.6M201.8,264.0 203.7,264.2 208.4,263.6M221.7,266.2 224.7,264.0 226.3,265.7 224.0,267.7 221.7,266.2M238.8,134.4 240.1,132.5 242.6,132.5 246.4,132.5 250.7,131.6 255.5,131.8M255.5,131.8 253.9,126.3 255.5,125.5 253.4,124.6 253.0,122.1 251.1,121.1 249.2,121.1M246.4,116.2 251.1,116.7 254.9,118.0 258.5,120.0M258.5,120.0 261.1,121.8 262.7,120.3M253.0,122.1 255.8,121.6 258.5,120.0M255.8,121.6 258.7,126.0 258.7,127.5M255.5,125.5 258.7,127.5 261.5,125.5 263.2,128.7M255.5,131.8 257.7,134.9 256.6,139.0 258.1,141.3 261.1,144.0 261.0,145.8 262.7,148.0M250.7,131.6 248.6,137.2 244.1,140.4M244.1,140.4 244.8,143.1 247.1,143.8 250.1,145.5 255.3,149.7 258.7,149.9M258.7,149.9 260.4,148.0 261.5,148.0M258.7,149.9 260.6,151.2 262.3,151.2M244.1,140.4 240.3,142.9 238.2,142.0M244.8,143.1 240.7,144.7 242.6,146.9 241.6,148.0 240.1,148.2 238.8,149.7 236.9,149.3M235.5,145.1 236.7,149.0M238.2,142.0 237.8,144.7 236.9,149.0M237.1,141.1 238.4,140.6 239.9,138.6 238.8,137.7M238.4,140.6 238.2,142.0M251.7,176.0 252.6,173.9 254.9,174.1 258.7,174.5 260.6,174.9 261.9,172.5 263.6,171.7 269.1,170.9M269.1,170.9 274.8,168.9 276.1,164.8 275.2,163.4M275.2,163.4 270.2,163.0 268.3,160.3M275.2,163.4 276.3,160.3 276.7,158.8 277.5,158.8M269.1,170.9 271.2,175.4M272.7,131.3 274.8,129.7 279.0,128.9 281.4,130.4 283.0,130.9 285.2,133.0 286.6,133.0 286.6,135.3M286.6,135.3 285.4,138.3 286.0,140.2 285.4,142.4 286.0,144.7 287.7,146.2 286.0,148.2M286.0,148.2 287.7,151.0 289.6,151.9 289.6,154.0 290.5,155.3 287.9,156.1 287.3,158.2M286.0,148.2 289.0,149.3 291.9,149.0 296.2,148.2 296.4,146.0 299.4,144.2 301.9,143.8 302.3,141.3 303.8,140.4 303.2,139.0 305.3,138.3 306.3,135.6 305.9,134.2 308.0,132.5 312.0,132.1M286.6,135.3 288.6,136.0 290.3,134.6 292.8,133.7 293.4,131.8 295.1,130.9 299.1,131.6 299.6,132.1 301.9,131.8 302.3,130.6 303.6,130.6 303.8,129.4 305.7,128.9 306.3,132.8 309.5,131.1 312.5,131.6M296.6,131.1 296.8,129.7 292.2,127.3 288.8,124.8 287.9,122.1 284.5,121.3 284.3,119.3 281.6,117.7 278.6,121.6 276.7,121.6M276.7,121.6 276.7,113.3M276.7,121.6 274.6,120.0 272.9,119.0 269.9,120.5M299.1,131.6 299.4,128.5 298.3,126.5 300.4,125.8 301.9,124.3 304.2,124.8 306.5,126.3 310.1,126.3M301.9,124.3 304.2,122.3 306.5,124.1 308.9,122.8 307.4,121.6 304.2,120.8 303.2,120.8M299.6,122.3 300.6,123.3 301.5,121.3 303.2,120.8 305.1,119.0M295.8,117.2 295.7,119.8 296.6,119.8 299.6,122.3M305.1,119.0 309.9,118.8 310.1,117.2 314.2,117.5 320.3,117.7 322.6,119.3M322.6,119.3 323.7,117.0 323.0,113.0M322.6,119.3 319.2,121.3 316.3,122.3 314.6,123.8 312.3,123.6 310.4,125.3 310.1,126.3M310.1,126.3 310.4,128.2 312.5,128.7 312.5,131.6M312.5,131.6 314.6,134.6 318.0,135.6 320.1,138.3 319.7,142.2 320.7,142.4 319.7,144.7 324.1,147.5M310.8,137.4 310.8,141.3 313.5,142.9 311.8,145.8 310.6,148.0 308.7,150.1 306.8,152.5 304.0,152.3 302.5,154.0 303.6,157.2 305.1,159.9 301.0,160.1 299.8,161.3M310.8,137.4 313.7,137.7 318.0,135.6M322.4,150.6 324.1,147.5M322.4,150.6 326.0,152.5 329.8,153.4 333.2,155.3 337.6,155.7 337.6,152.5M324.1,147.5 326.0,147.3 329.8,150.6 333.6,152.3 337.6,152.5M338.9,153.8 339.3,154.6 345.0,154.6 345.1,153.4 344.0,152.3 340.2,152.1 338.9,153.8M337.6,152.5 338.9,153.8M345.1,153.4 348.8,150.1 352.5,149.3 355.0,151.6M339.3,155.7 340.8,158.0 345.7,158.6 345.3,160.3 343.4,160.7 343.8,162.8 345.5,161.3 346.1,166.2 345.5,167.5M337.6,155.7 337.6,156.9 339.1,158.2 337.4,159.3 338.7,160.3 338.5,162.4 339.3,164.8 339.5,165.2M337.6,155.7 339.3,155.7M355.0,151.6 352.9,153.8 351.0,155.3 349.9,158.2 348.9,160.9 347.4,160.7 347.6,162.8 346.1,166.2M355.0,151.6 357.7,153.1 357.7,156.7 355.6,159.0 355.4,160.9 358.0,162.4 359.2,163.0 358.6,164.6 360.5,166.0 362.4,166.4M360.3,168.1 358.2,169.3 356.0,171.7 355.2,171.9 357.5,176.6 356.7,178.4 358.6,183.3 359.4,185.0 357.9,187.7M360.3,168.1 362.4,166.4M362.4,166.4 364.1,164.0M364.1,164.0 366.4,163.2 370.2,162.2 372.8,163.0 372.5,164.8 375.3,165.8M364.1,164.0 365.8,167.3 368.9,168.1 367.7,170.1 370.0,171.7 372.5,174.9 374.2,177.8 374.4,179.4M360.3,168.1 361.1,169.9 362.4,169.9 362.2,173.9 364.1,172.5 366.6,172.1 369.0,173.9 369.2,176.0 370.7,177.6 370.6,180.0 370.0,180.2M370.0,180.2 365.8,180.2 364.9,181.5 364.7,183.7 365.6,185.2M374.4,179.4 374.4,183.9 371.5,185.2 371.3,186.6 368.7,187.7M370.0,180.2 371.5,180.2 374.4,179.4M360.3,195.4 362.2,196.7 364.1,195.7M378.3,203.7 380.0,205.8 382.9,204.9 387.6,204.7 389.0,202.2 389.7,199.5 393.5,199.5M437.9,212.4 437.9,224.8M405.8,225.4 407.5,224.6 407.7,225.6M343.1,111.4 351.4,113.8 353.3,118.0 362.0,118.3 369.4,120.5 378.9,118.3 382.7,115.4 382.7,111.7 389.7,110.9 393.1,107.6 397.9,107.3 393.9,104.6 390.5,104.0 389.7,103.1 391.8,98.5M391.8,98.5 387.2,97.1 384.8,99.1 379.1,100.3M391.8,98.5 396.2,97.9 399.4,90.1 398.1,87.9 404.9,87.2 410.6,92.8 412.3,98.5 418.2,101.1 418.9,104.6 425.9,102.6 425.9,104.6 422.7,112.0 419.5,112.2 418.9,117.2 418.2,118.8M418.2,118.8 416.6,117.2 413.2,119.8 411.1,120.3 406.4,124.8M410.8,130.1 413.8,128.2M153.6,120.0 155.0,119.8 158.0,120.0 158.7,120.8 157.4,122.3 157.2,125.5 156.3,125.8 157.2,129.2 156.5,131.6M167.1,116.2 171.8,117.7 176.6,118.8M184.7,115.1 183.8,112.0 183.8,109.5 182.1,108.4 183.8,105.1 184.9,104.8 186.0,100.9 182.6,99.4 181.5,99.4 178.5,97.9 175.4,95.0M183.8,109.5 186.6,108.7 188.1,108.2 190.2,107.6 193.6,106.5 196.5,107.9M184.9,104.8 188.7,105.1 190.2,105.1 195.2,105.1 195.2,102.9 196.7,101.4M196.7,101.4 193.4,97.1 198.6,95.0 198.4,91.9 197.4,86.0M182.6,99.4 182.1,95.9 181.9,92.5 183.8,91.0 184.2,87.9M182.1,95.9 180.0,93.8 176.9,94.1M186.8,82.7 189.1,83.0M198.6,95.0 202.5,97.1 206.2,99.4 213.4,100.6M213.4,100.6 216.0,95.9 215.3,91.9 215.8,86.0 213.7,84.3 207.7,84.3M196.7,101.4 198.9,100.9 202.7,102.0 203.1,103.7 201.0,106.8 196.5,107.9M202.7,102.0 206.2,99.4M203.1,103.7 206.2,104.3 209.4,102.3 212.6,102.6 213.9,103.7 210.7,108.7 209.0,109.0 206.2,109.5 201.8,107.9 201.0,106.8M212.6,102.6 213.4,100.6M213.9,103.7 217.7,104.6 220.9,102.9 223.8,106.8 224.0,110.6 226.6,111.2M209.0,109.0 211.1,112.5 213.5,113.3 213.9,115.1 218.9,115.7 221.7,114.3 224.7,115.4M220.9,102.9 222.6,102.6 225.9,104.0 227.4,108.2 224.0,110.6M216.0,95.9 215.3,93.5 221.7,93.5 228.3,94.1 230.8,91.6 235.0,91.3 237.8,96.8 242.6,98.2 246.5,99.1 245.8,104.3 242.9,106.2M215.8,86.0 219.4,85.0 220.9,80.1 224.0,78.7 229.1,80.4 228.9,83.0 232.5,87.6 230.8,91.6M210.5,78.7 216.0,78.0 220.9,80.1M213.7,84.3 215.8,86.0M216.6,72.4 222.5,73.9 223.0,77.3 224.0,78.7M222.5,73.9 222.3,69.2 223.6,67.0M223.2,62.8 227.4,57.7 230.2,53.3 227.4,49.9 228.3,47.7 226.6,44.6 227.4,41.0 225.7,35.4 227.4,31.5 224.5,28.9 225.3,24.5 228.9,20.5M225.3,24.5 223.6,19.4 219.8,19.9 219.4,24.8 215.4,26.4 210.3,24.8 209.6,24.5M209.6,24.5 215.4,30.5 215.1,33.9 216.0,39.6 216.4,40.6M209.6,24.5 204.8,27.4 201.8,32.4 199.7,38.2 198.0,42.8 196.5,46.0 197.2,47.7 193.4,50.3 193.6,58.1 194.8,59.7 193.6,64.0 192.9,67.7 191.7,68.1M208.2,125.5 210.3,122.8 213.9,121.6 217.0,121.1 220.4,120.5 220.6,122.3M220.4,120.5 223.6,119.8M213.9,115.1 213.0,119.0 213.9,121.6M210.3,122.8 209.6,120.0 208.4,118.3 207.1,120.0M196.3,110.3 199.5,110.6 201.8,107.9M200.5,111.4 200.8,114.1 204.1,117.5 205.6,118.8M200.5,111.4 202.7,111.4 206.5,112.2 207.3,113.8 206.7,115.9 205.6,118.8M206.5,112.2 206.2,109.5M206.5,112.2 209.0,109.0M206.7,115.9 209.0,117.7 208.4,118.3M209.0,117.7 211.5,119.0 213.0,119.0M156.5,85.3 158.6,85.3M155.0,84.0 156.7,82.4 156.5,85.3" fill="none" stroke="#c9b3cf" stroke-width="0.55" stroke-opacity="0.85" stroke-linejoin="round"/>
<path d="M225.5,121.8 223.6,120.0 223.4,118.3 223.6,116.4 224.7,115.9 224.9,114.1 226.6,112.0 227.8,109.8 228.7,107.9 230.2,107.6 231.8,108.7 233.1,109.3 234.2,109.5 232.1,110.9 234.0,113.0 235.0,113.6 237.6,112.0 239.7,111.2 236.9,108.7 237.4,107.6 240.3,107.1 241.8,106.2 244.5,106.0 245.0,106.5 242.9,107.6 242.2,109.3 242.6,110.6 240.7,111.2 240.3,111.7 241.6,112.8 242.6,113.3 244.5,114.3 245.8,115.7 248.2,117.2 249.4,119.5 249.4,120.8 246.4,122.3 243.3,122.6 240.7,122.1 239.3,121.6 237.2,119.8 234.0,119.8 231.2,120.5 230.0,121.8 227.4,122.1ZM263.4,130.9 267.2,132.5 270.1,132.8 272.9,132.3 272.7,130.1 272.5,127.3 271.0,126.0 271.0,124.8 270.4,122.8 271.0,122.1 270.6,120.5 269.9,118.5 267.6,116.7 267.6,115.5 265.9,113.8 267.2,113.0 268.2,111.2 271.0,111.2 271.0,107.9 271.0,106.8 269.1,106.5 267.2,106.5 264.4,107.9 263.4,108.4 261.5,109.8 260.2,111.2 259.6,113.3 259.1,113.6 260.6,117.2 262.1,119.8 263.8,122.3 264.4,123.3 266.1,123.8 264.9,124.1 264.2,125.0 264.2,126.5 263.2,128.5ZM228.0,64.7 230.2,65.1 232.9,62.8 232.7,60.1 230.2,58.1 227.4,60.1ZM235.9,60.9 238.8,60.9 239.3,57.7 237.4,54.9 235.7,55.7ZM230.8,209.4 231.2,212.2 233.1,213.0 235.0,210.3 235.5,208.1 233.6,206.7 231.2,207.5ZM-4.0,107.3 -0.2,107.6 3.6,106.8 5.5,107.9 9.3,107.9 10.3,106.5 9.3,104.0 6.5,101.7 3.1,101.1 0.8,103.7 -2.1,105.7ZM4.0,119.8 6.5,120.5 7.0,117.2 6.7,113.3 9.3,109.8 8.4,109.3 5.5,110.6 3.6,112.8 4.4,115.9ZM9.9,109.5 12.2,111.2 12.2,114.6 14.1,117.2 15.6,116.4 16.0,113.3 18.8,113.3 18.8,111.2 16.0,109.3 12.2,108.7ZM12.3,120.5 16.0,121.1 20.7,118.3 20.1,117.5 16.3,118.0 13.1,119.5ZM19.2,116.4 22.6,116.4 26.0,115.7 25.8,114.3 23.5,114.6 20.7,115.1Z" fill="#aad3df"/>
<circle cx="-1.1" cy="179.6" r="9.2" fill="#808080" fill-opacity="0.8" stroke="#808080" stroke-opacity="0.6" stroke-width="1.6"/>
<circle cx="11.1" cy="188.6" r="9.2" fill="#ffff00" fill-opacity="0.8" stroke="#ffff00" stroke-opacity="0.6" stroke-width="1.6"/>
<circle cx="39.8" cy="184.4" r="9.2" fill="#808080" fill-opacity="0.8" stroke="#808080" stroke-opacity="0.6" stroke-width="1.6"/>
<circle cx="30.0" cy="198.6" r="9.2" fill="#808080" fill-opacity="0.8" stroke="#808080" stroke-opacity="0.6" stroke-width="1.6"/>
<circle cx="24.4" cy="230.5" r="9.2" fill="#ffff00" fill-opacity="0.8" stroke="#ffff00" stroke-opacity="0.6" stroke-width="1.6"/>
<circle cx="176.3" cy="132.6" r="9.2" fill="#ffff00" fill-opacity="0.8" stroke="#ffff00" stroke-opacity="0.6" stroke-width="1.6"/>
<circle cx="205.4" cy="115.0" r="9.2" fill="#9c0066" fill-opacity="0.8" stroke="#9c0066" stroke-opacity="0.6" stroke-width="1.6"/>
<circle cx="210.6" cy="118.1" r="9.2" fill="#ff7e00" fill-opacity="0.8" stroke="#ff7e00" stroke-opacity="0.6" stroke-width="1.6"/>
<circle cx="144.5" cy="189.4" r="9.2" fill="#ffff00" fill-opacity="0.8" stroke="#ffff00" stroke-opacity="0.6" stroke-width="1.6"/>
<circle cx="155.3" cy="183.4" r="9.2" fill="#ff0000" fill-opacity="0.8" stroke="#ff0000" stroke-opacity="0.6" stroke-width="1.6"/>
<circle cx="170.1" cy="196.9" r="9.2" fill="#ffff00" fill-opacity="0.8" stroke="#ffff00" stroke-opacity="0.6" stroke-width="1.6"/>
<circle cx="162.9" cy="197.5" r="9.2" fill="#808080" fill-opacity="0.8" stroke="#808080" stroke-opacity="0.6" stroke-width="1.6"/>
<circle cx="199.0" cy="184.4" r="9.2" fill="#ff0000" fill-opacity="0.8" stroke="#ff0000" stroke-opacity="0.6" stroke-width="1.6"/>
<circle cx="238.6" cy="143.7" r="9.2" fill="#808080" fill-opacity="0.8" stroke="#808080" stroke-opacity="0.6" stroke-width="1.6"/>
<circle cx="254.7" cy="140.6" r="9.2" fill="#ff0000" fill-opacity="0.8" stroke="#ff0000" stroke-opacity="0.6" stroke-width="1.6"/>
<circle cx="259.1" cy="159.3" r="9.2" fill="#808080" fill-opacity="0.8" stroke="#808080" stroke-opacity="0.6" stroke-width="1.6"/>
<circle cx="273.7" cy="159.8" r="9.2" fill="#ffff00" fill-opacity="0.8" stroke="#ffff00" stroke-opacity="0.6" stroke-width="1.6"/>
<circle cx="261.5" cy="149.3" r="9.2" fill="#ff7e00" fill-opacity="0.8" stroke="#ff7e00" stroke-opacity="0.6" stroke-width="1.6"/>
<circle cx="266.4" cy="156.1" r="9.2" fill="#ff7e00" fill-opacity="0.8" stroke="#ff7e00" stroke-opacity="0.6" stroke-width="1.6"/>
<circle cx="244.8" cy="165.8" r="9.2" fill="#ffff00" fill-opacity="0.8" stroke="#ffff00" stroke-opacity="0.6" stroke-width="1.6"/>
<circle cx="243.1" cy="190.4" r="9.2" fill="#00e400" fill-opacity="0.8" stroke="#00e400" stroke-opacity="0.6" stroke-width="1.6"/>
<circle cx="245.0" cy="190.4" r="9.2" fill="#00e400" fill-opacity="0.8" stroke="#00e400" stroke-opacity="0.6" stroke-width="1.6"/>
<circle cx="232.1" cy="177.6" r="9.2" fill="#ff7e00" fill-opacity="0.8" stroke="#ff7e00" stroke-opacity="0.6" stroke-width="1.6"/>
<circle cx="232.3" cy="206.9" r="9.2" fill="#808080" fill-opacity="0.8" stroke="#808080" stroke-opacity="0.6" stroke-width="1.6"/>
<circle cx="281.2" cy="129.8" r="9.2" fill="#808080" fill-opacity="0.8" stroke="#808080" stroke-opacity="0.6" stroke-width="1.6"/>
<circle cx="305.9" cy="94.7" r="9.2" fill="#ffff00" fill-opacity="0.8" stroke="#ffff00" stroke-opacity="0.6" stroke-width="1.6"/>
<circle cx="312.0" cy="117.6" r="9.2" fill="#7e0023" fill-opacity="0.8" stroke="#7e0023" stroke-opacity="0.6" stroke-width="1.6"/>
<circle cx="301.9" cy="121.6" r="9.2" fill="#ffff00" fill-opacity="0.8" stroke="#ffff00" stroke-opacity="0.6" stroke-width="1.6"/>
<circle cx="316.3" cy="116.6" r="9.2" fill="#ff0000" fill-opacity="0.8" stroke="#ff0000" stroke-opacity="0.6" stroke-width="1.6"/>
<circle cx="301.0" cy="128.3" r="9.2" fill="#ff7e00" fill-opacity="0.8" stroke="#ff7e00" stroke-opacity="0.6" stroke-width="1.6"/>
<circle cx="301.7" cy="137.9" r="9.2" fill="#ff0000" fill-opacity="0.8" stroke="#ff0000" stroke-opacity="0.6" stroke-width="1.6"/>
<circle cx="309.0" cy="139.7" r="9.2" fill="#ffff00" fill-opacity="0.8" stroke="#ffff00" stroke-opacity="0.6" stroke-width="1.6"/>
<circle cx="311.4" cy="144.7" r="9.2" fill="#ff0000" fill-opacity="0.8" stroke="#ff0000" stroke-opacity="0.6" stroke-width="1.6"/>
<circle cx="316.9" cy="151.0" r="9.2" fill="#ff0000" fill-opacity="0.8" stroke="#ff0000" stroke-opacity="0.6" stroke-width="1.6"/>
<circle cx="297.6" cy="158.9" r="9.2" fill="#ff7e00" fill-opacity="0.8" stroke="#ff7e00" stroke-opacity="0.6" stroke-width="1.6"/>
<circle cx="332.3" cy="152.9" r="9.2" fill="#ffff00" fill-opacity="0.8" stroke="#ffff00" stroke-opacity="0.6" stroke-width="1.6"/>
<circle cx="338.1" cy="163.6" r="9.2" fill="#ff0000" fill-opacity="0.8" stroke="#ff0000" stroke-opacity="0.6" stroke-width="1.6"/>
<circle cx="341.9" cy="161.1" r="9.2" fill="#ff0000" fill-opacity="0.8" stroke="#ff0000" stroke-opacity="0.6" stroke-width="1.6"/>
<circle cx="319.3" cy="174.1" r="9.2" fill="#ff7e00" fill-opacity="0.8" stroke="#ff7e00" stroke-opacity="0.6" stroke-width="1.6"/>
<circle cx="308.7" cy="170.7" r="9.2" fill="#ff0000" fill-opacity="0.8" stroke="#ff0000" stroke-opacity="0.6" stroke-width="1.6"/>
<circle cx="322.7" cy="182.5" r="9.2" fill="#ff7e00" fill-opacity="0.8" stroke="#ff7e00" stroke-opacity="0.6" stroke-width="1.6"/>
<circle cx="321.9" cy="194.4" r="9.2" fill="#ffff00" fill-opacity="0.8" stroke="#ffff00" stroke-opacity="0.6" stroke-width="1.6"/>
<circle cx="352.8" cy="175.2" r="9.2" fill="#ffff00" fill-opacity="0.8" stroke="#ffff00" stroke-opacity="0.6" stroke-width="1.6"/>
<circle cx="371.2" cy="166.8" r="9.2" fill="#ffff00" fill-opacity="0.8" stroke="#ffff00" stroke-opacity="0.6" stroke-width="1.6"/>
<circle cx="365.1" cy="172.9" r="9.2" fill="#ff0000" fill-opacity="0.8" stroke="#ff0000" stroke-opacity="0.6" stroke-width="1.6"/>
<circle cx="372.8" cy="186.9" r="9.2" fill="#ffff00" fill-opacity="0.8" stroke="#ffff00" stroke-opacity="0.6" stroke-width="1.6"/>
<circle cx="385.4" cy="162.6" r="9.2" fill="#ffff00" fill-opacity="0.8" stroke="#ffff00" stroke-opacity="0.6" stroke-width="1.6"/>
<circle cx="400.8" cy="145.3" r="9.2" fill="#ff0000" fill-opacity="0.8" stroke="#ff0000" stroke-opacity="0.6" stroke-width="1.6"/>
<circle cx="373.2" cy="104.0" r="9.2" fill="#7e0023" fill-opacity="0.8" stroke="#7e0023" stroke-opacity="0.6" stroke-width="1.6"/>
<circle cx="391.2" cy="125.0" r="9.2" fill="#ff7e00" fill-opacity="0.8" stroke="#ff7e00" stroke-opacity="0.6" stroke-width="1.6"/>
<circle cx="404.5" cy="120.3" r="9.2" fill="#ffff00" fill-opacity="0.8" stroke="#ffff00" stroke-opacity="0.6" stroke-width="1.6"/>
<circle cx="373.0" cy="219.3" r="9.2" fill="#00e400" fill-opacity="0.8" stroke="#00e400" stroke-opacity="0.6" stroke-width="1.6"/>
<rect x="-8.7" y="174.6" width="15.2" height="8" rx="2" fill="#fff" fill-opacity="0.85"/>
<text x="-1.1" y="181.5" text-anchor="middle" class="ml">N/A</text>
<rect x="5.9" y="183.6" width="10.3" height="8" rx="2" fill="#fff" fill-opacity="0.85"/>
<text x="11.1" y="190.5" text-anchor="middle" class="ml">58</text>
<rect x="32.2" y="179.4" width="15.2" height="8" rx="2" fill="#fff" fill-opacity="0.85"/>
<text x="39.8" y="186.3" text-anchor="middle" class="ml">N/A</text>
<rect x="22.4" y="193.6" width="15.2" height="8" rx="2" fill="#fff" fill-opacity="0.85"/>
<text x="30.0" y="200.5" text-anchor="middle" class="ml">N/A</text>
<rect x="19.3" y="225.5" width="10.3" height="8" rx="2" fill="#fff" fill-opacity="0.85"/>
<text x="24.4" y="232.4" text-anchor="middle" class="ml">75</text>
<rect x="171.2" y="127.6" width="10.3" height="8" rx="2" fill="#fff" fill-opacity="0.85"/>
<text x="176.3" y="134.5" text-anchor="middle" class="ml">66</text>
<rect x="198.0" y="110.0" width="14.8" height="8" rx="2" fill="#fff" fill-opacity="0.85"/>
<text x="205.4" y="116.9" text-anchor="middle" class="ml">212</text>
<rect x="203.3" y="113.1" width="14.8" height="8" rx="2" fill="#fff" fill-opacity="0.85"/>
<text x="210.6" y="120.0" text-anchor="middle" class="ml">102</text>
<rect x="139.4" y="184.4" width="10.3" height="8" rx="2" fill="#fff" fill-opacity="0.85"/>
<text x="144.5" y="191.3" text-anchor="middle" class="ml">70</text>
<rect x="148.0" y="178.4" width="14.8" height="8" rx="2" fill="#fff" fill-opacity="0.85"/>
<text x="155.3" y="185.3" text-anchor="middle" class="ml">154</text>
<rect x="165.0" y="191.9" width="10.3" height="8" rx="2" fill="#fff" fill-opacity="0.85"/>
<text x="170.1" y="198.8" text-anchor="middle" class="ml">56</text>
<rect x="155.3" y="192.5" width="15.2" height="8" rx="2" fill="#fff" fill-opacity="0.85"/>
<text x="162.9" y="199.4" text-anchor="middle" class="ml">N/A</text>
<rect x="191.7" y="179.4" width="14.8" height="8" rx="2" fill="#fff" fill-opacity="0.85"/>
<text x="199.0" y="186.3" text-anchor="middle" class="ml">177</text>
<rect x="231.0" y="138.7" width="15.2" height="8" rx="2" fill="#fff" fill-opacity="0.85"/>
<text x="238.6" y="145.6" text-anchor="middle" class="ml">N/A</text>
<rect x="247.3" y="135.6" width="14.8" height="8" rx="2" fill="#fff" fill-opacity="0.85"/>
<text x="254.7" y="142.5" text-anchor="middle" class="ml">155</text>
<rect x="251.5" y="154.3" width="15.2" height="8" rx="2" fill="#fff" fill-opacity="0.85"/>
<text x="259.1" y="161.2" text-anchor="middle" class="ml">N/A</text>
<rect x="268.5" y="154.8" width="10.3" height="8" rx="2" fill="#fff" fill-opacity="0.85"/>
<text x="273.7" y="161.7" text-anchor="middle" class="ml">59</text>
<rect x="254.1" y="144.3" width="14.8" height="8" rx="2" fill="#fff" fill-opacity="0.85"/>
<text x="261.5" y="151.2" text-anchor="middle" class="ml">149</text>
<rect x="259.0" y="151.1" width="14.8" height="8" rx="2" fill="#fff" fill-opacity="0.85"/>
<text x="266.4" y="158.0" text-anchor="middle" class="ml">114</text>
<rect x="239.7" y="160.8" width="10.3" height="8" rx="2" fill="#fff" fill-opacity="0.85"/>
<text x="244.8" y="167.7" text-anchor="middle" class="ml">90</text>
<rect x="238.0" y="185.4" width="10.3" height="8" rx="2" fill="#fff" fill-opacity="0.85"/>
<text x="243.1" y="192.3" text-anchor="middle" class="ml">45</text>
<rect x="239.9" y="185.4" width="10.3" height="8" rx="2" fill="#fff" fill-opacity="0.85"/>
<text x="245.0" y="192.3" text-anchor="middle" class="ml">49</text>
<rect x="224.8" y="172.6" width="14.8" height="8" rx="2" fill="#fff" fill-opacity="0.85"/>
<text x="232.1" y="179.5" text-anchor="middle" class="ml">108</text>
<rect x="224.7" y="201.9" width="15.2" height="8" rx="2" fill="#fff" fill-opacity="0.85"/>
<text x="232.3" y="208.8" text-anchor="middle" class="ml">N/A</text>
<rect x="273.6" y="124.8" width="15.2" height="8" rx="2" fill="#fff" fill-opacity="0.85"/>
<text x="281.2" y="131.7" text-anchor="middle" class="ml">N/A</text>
<rect x="304.6" y="112.6" width="14.8" height="8" rx="2" fill="#fff" fill-opacity="0.85"/>
<text x="312.0" y="119.5" text-anchor="middle" class="ml">351</text>
<rect x="296.8" y="116.6" width="10.3" height="8" rx="2" fill="#fff" fill-opacity="0.85"/>
<text x="301.9" y="123.5" text-anchor="middle" class="ml">97</text>
<rect x="309.0" y="111.6" width="14.8" height="8" rx="2" fill="#fff" fill-opacity="0.85"/>
<text x="316.3" y="118.5" text-anchor="middle" class="ml">169</text>
<rect x="293.6" y="123.3" width="14.8" height="8" rx="2" fill="#fff" fill-opacity="0.85"/>
<text x="301.0" y="130.2" text-anchor="middle" class="ml">119</text>
<rect x="294.3" y="132.9" width="14.8" height="8" rx="2" fill="#fff" fill-opacity="0.85"/>
<text x="301.7" y="139.8" text-anchor="middle" class="ml">119</text>
<rect x="303.9" y="134.7" width="10.3" height="8" rx="2" fill="#fff" fill-opacity="0.85"/>
<text x="309.0" y="141.6" text-anchor="middle" class="ml">98</text>
<rect x="304.0" y="139.7" width="14.8" height="8" rx="2" fill="#fff" fill-opacity="0.85"/>
<text x="311.4" y="146.6" text-anchor="middle" class="ml">155</text>
<rect x="309.5" y="146.0" width="14.8" height="8" rx="2" fill="#fff" fill-opacity="0.85"/>
<text x="316.9" y="152.9" text-anchor="middle" class="ml">163</text>
<rect x="290.2" y="153.9" width="14.8" height="8" rx="2" fill="#fff" fill-opacity="0.85"/>
<text x="297.6" y="160.8" text-anchor="middle" class="ml">117</text>
<rect x="327.1" y="147.9" width="10.3" height="8" rx="2" fill="#fff" fill-opacity="0.85"/>
<text x="332.3" y="154.8" text-anchor="middle" class="ml">76</text>
<rect x="330.7" y="158.6" width="14.8" height="8" rx="2" fill="#fff" fill-opacity="0.85"/>
<text x="338.1" y="165.5" text-anchor="middle" class="ml">174</text>
<rect x="334.6" y="156.1" width="14.8" height="8" rx="2" fill="#fff" fill-opacity="0.85"/>
<text x="341.9" y="163.0" text-anchor="middle" class="ml">184</text>
<rect x="311.9" y="169.1" width="14.8" height="8" rx="2" fill="#fff" fill-opacity="0.85"/>
<text x="319.3" y="176.0" text-anchor="middle" class="ml">137</text>
<rect x="301.3" y="165.7" width="14.8" height="8" rx="2" fill="#fff" fill-opacity="0.85"/>
<text x="308.7" y="172.6" text-anchor="middle" class="ml">161</text>
<rect x="315.3" y="177.5" width="14.8" height="8" rx="2" fill="#fff" fill-opacity="0.85"/>
<text x="322.7" y="184.4" text-anchor="middle" class="ml">118</text>
<rect x="316.8" y="189.4" width="10.3" height="8" rx="2" fill="#fff" fill-opacity="0.85"/>
<text x="321.9" y="196.3" text-anchor="middle" class="ml">75</text>
<rect x="347.7" y="170.2" width="10.3" height="8" rx="2" fill="#fff" fill-opacity="0.85"/>
<text x="352.8" y="177.1" text-anchor="middle" class="ml">87</text>
<rect x="366.1" y="161.8" width="10.3" height="8" rx="2" fill="#fff" fill-opacity="0.85"/>
<text x="371.2" y="168.7" text-anchor="middle" class="ml">84</text>
<rect x="357.7" y="167.9" width="14.8" height="8" rx="2" fill="#fff" fill-opacity="0.85"/>
<text x="365.1" y="174.8" text-anchor="middle" class="ml">153</text>
<rect x="367.7" y="181.9" width="10.3" height="8" rx="2" fill="#fff" fill-opacity="0.85"/>
<text x="372.8" y="188.8" text-anchor="middle" class="ml">77</text>
<rect x="380.2" y="157.6" width="10.3" height="8" rx="2" fill="#fff" fill-opacity="0.85"/>
<text x="385.4" y="164.5" text-anchor="middle" class="ml">59</text>
<rect x="393.4" y="140.3" width="14.8" height="8" rx="2" fill="#fff" fill-opacity="0.85"/>
<text x="400.8" y="147.2" text-anchor="middle" class="ml">156</text>
<rect x="365.8" y="99.0" width="14.8" height="8" rx="2" fill="#fff" fill-opacity="0.85"/>
<text x="373.2" y="105.9" text-anchor="middle" class="ml">357</text>
<rect x="383.9" y="120.0" width="14.8" height="8" rx="2" fill="#fff" fill-opacity="0.85"/>
<text x="391.2" y="126.9" text-anchor="middle" class="ml">126</text>
<rect x="399.4" y="115.3" width="10.3" height="8" rx="2" fill="#fff" fill-opacity="0.85"/>
<text x="404.5" y="122.2" text-anchor="middle" class="ml">79</text>
<rect x="367.9" y="214.3" width="10.3" height="8" rx="2" fill="#fff" fill-opacity="0.85"/>
<text x="373.0" y="221.2" text-anchor="middle" class="ml">48</text>
</svg>
<div id="tip" class="abs"></div>
<div id="pop" class="abs"></div>
<div class="abs" style="left:303px;top:90px;width:18px;height:11px;background:#fff"></div>
<div id="poptxt" class="abs">Bishkek<br>2020-12-16 7:00 PM<br>(LT)</div>
<div id="ptab" class="abs">
 <div class="abs" style="left:0;top:0;width:85.2px;height:17.6px;background:#00467f"></div>
 <div class="abs" style="left:0;top:2.7px;width:55px;text-align:center;color:#fff;font-weight:bold;font-size:9.33px;line-height:10px">Pollutant</div>
 <div class="abs" style="left:55px;top:2.7px;width:30px;text-align:center;color:#fff;font-weight:bold;font-size:9.33px;line-height:10px">AQI</div>
 <div class="abs" style="left:55px;top:17.6px;width:30.2px;height:19px;background:#4c0026"></div>
 <div class="abs" style="left:0;top:21.5px;width:55px;text-align:center;color:#333;font-size:9.33px;line-height:10px">PM2.5</div>
 <div class="abs" style="left:55px;top:21.5px;width:30px;text-align:center;color:#fff;font-weight:bold;font-size:9.33px;line-height:10px">351</div>
</div>
</div>

<!-- right column -->
<div class="abs hdbar" style="left:502.5px;top:3.7px;width:222.5px;height:23px;line-height:23.2px">Select a City</div>
<div class="abs sel" style="left:502px;top:28.4px;width:223.5px;height:24px">Bishkek<span class="abs" style="right:18.5px;top:-2px;color:#888;font-size:11px">×</span><span class="abs" style="right:7px;top:9px;border:3px solid transparent;border-top:3.5px solid #888;border-bottom:none;width:0;height:0"></span></div>
<div class="abs hdbar" style="left:502.5px;top:66.5px;width:222.5px;height:23.3px">Select a Parameter</div>
<div class="abs sel" style="left:502px;top:91.4px;width:223.5px;height:24px">PM2.5<span class="abs" style="right:18.5px;top:-2px;color:#888;font-size:11px">×</span><span class="abs" style="right:7px;top:9px;border:3px solid transparent;border-top:3.5px solid #888;border-bottom:none;width:0;height:0"></span></div>
<div class="abs" style="left:502px;top:129px;width:224px;height:49px;background:#fff;border:1px solid #ccc"></div>
<div class="abs" style="left:509px;top:136px;font-size:9.33px;font-weight:bold;line-height:12px;color:#333">Bishkek</div>
<svg class="abs" style="left:695px;top:147px" width="23" height="23" viewBox="0 0 23 23">
<rect width="23" height="23" fill="#f2b43e"/>
<circle cx="4.8" cy="17.9" r="2.1" fill="#fff"/>
<path d="M2.9 10.1 A9.6 9.6 0 0 1 12.5 19.7" fill="none" stroke="#fff" stroke-width="2.8"/>
<path d="M2.9 4.2 A15.5 15.5 0 0 1 18.4 19.7" fill="none" stroke="#fff" stroke-width="2.8"/>
</svg>
<div class="abs" style="left:502px;top:185px;width:226px;font-size:7.33px;line-height:13px;color:#555;white-space:nowrap">Note: Values above 500 are considered Beyond the AQI. Follow<br>recommendations for the Hazardous category. Additional information<br>on reducing exposure to extremely high levels of particle pollution is<br>available <b style="color:#123;text-decoration:underline">here</b>.</div>

<!-- tabs -->
<div class="abs tab" style="left:13px;width:72px;height:21px;background:#fff;border:1px solid #bbb;border-top:2px solid #00467f;border-bottom:none;color:#333;line-height:20px">AQI</div>
<div class="abs tab" style="left:87px;width:111px">Concentration</div>
<div class="abs tab" style="left:200px;width:92px">Historical</div>
<div class="abs" style="left:13px;top:336px;width:713px;height:1px;background:#999"></div>
<div class="abs" style="left:13px;top:343.8px;font-size:9.33px;line-height:12px;color:#333;white-space:nowrap">Learn more about how the Air Quality Index [AQI] is calculated from the EPA <span style="text-decoration:underline;color:#123;text-shadow:0 0 0.4px #123">here</span>.</div>

<!-- chart -->
<div class="abs" style="left:13px;top:370px;width:534px;height:211px;background:#fff">
<svg class="abs" style="left:0;top:0" width="533" height="211" viewBox="0 0 533 211">
<rect x="50.3" y="161.50" width="477" height="1" fill="#c0d0e0"/>
<text x="40" y="164.2" text-anchor="end" class="ax">0</text>
<rect x="50.3" y="137.28" width="477" height="1" fill="#e6e6e6"/>
<text x="40" y="140.0" text-anchor="end" class="ax">100</text>
<rect x="50.3" y="113.06" width="477" height="1" fill="#e6e6e6"/>
<text x="40" y="115.8" text-anchor="end" class="ax">200</text>
<rect x="50.3" y="88.84" width="477" height="1" fill="#e6e6e6"/>
<text x="40" y="91.5" text-anchor="end" class="ax">300</text>
<rect x="50.3" y="64.62" width="477" height="1" fill="#e6e6e6"/>
<text x="40" y="67.3" text-anchor="end" class="ax">400</text>
<rect x="50.3" y="40.40" width="477" height="1" fill="#e6e6e6"/>
<text x="40" y="43.1" text-anchor="end" class="ax">500</text>
<rect x="55.40" y="92.97" width="10.4" height="69.03" fill="#99004c" stroke="#555" stroke-width="0.7"/>
<rect x="70.13" y="162" width="0.8" height="4" fill="#c0d0e0"/>
<text transform="translate(64.1,171.5) rotate(-45)" text-anchor="end" class="xl">8 PM</text>
<rect x="75.25" y="84.50" width="10.4" height="77.50" fill="#4c0026" stroke="#555" stroke-width="0.7"/>
<rect x="89.98" y="162" width="0.8" height="4" fill="#c0d0e0"/>
<text transform="translate(84.0,171.5) rotate(-45)" text-anchor="end" class="xl">9 PM</text>
<rect x="95.11" y="82.07" width="10.4" height="79.93" fill="#4c0026" stroke="#555" stroke-width="0.7"/>
<rect x="109.84" y="162" width="0.8" height="4" fill="#c0d0e0"/>
<text transform="translate(103.8,171.5) rotate(-45)" text-anchor="end" class="xl">10 PM</text>
<rect x="114.96" y="88.13" width="10.4" height="73.87" fill="#4c0026" stroke="#555" stroke-width="0.7"/>
<rect x="129.69" y="162" width="0.8" height="4" fill="#c0d0e0"/>
<text transform="translate(123.7,171.5) rotate(-45)" text-anchor="end" class="xl">11 PM</text>
<rect x="134.82" y="106.78" width="10.4" height="55.22" fill="#99004c" stroke="#555" stroke-width="0.7"/>
<rect x="149.55" y="162" width="0.8" height="4" fill="#c0d0e0"/>
<text transform="translate(143.5,171.5) rotate(-45)" text-anchor="end" class="xl">Dec 16, 2020 12 AM</text>
<rect x="154.68" y="115.50" width="10.4" height="46.50" fill="#ff0000" stroke="#555" stroke-width="0.7"/>
<rect x="169.40" y="162" width="0.8" height="4" fill="#c0d0e0"/>
<text transform="translate(163.4,171.5) rotate(-45)" text-anchor="end" class="xl">1 AM</text>
<rect x="174.53" y="118.40" width="10.4" height="43.60" fill="#ff0000" stroke="#555" stroke-width="0.7"/>
<rect x="189.26" y="162" width="0.8" height="4" fill="#c0d0e0"/>
<text transform="translate(183.2,171.5) rotate(-45)" text-anchor="end" class="xl">2 AM</text>
<rect x="194.39" y="120.34" width="10.4" height="41.66" fill="#ff0000" stroke="#555" stroke-width="0.7"/>
<rect x="209.11" y="162" width="0.8" height="4" fill="#c0d0e0"/>
<text transform="translate(203.1,171.5) rotate(-45)" text-anchor="end" class="xl">3 AM</text>
<rect x="214.24" y="122.76" width="10.4" height="39.24" fill="#ff0000" stroke="#555" stroke-width="0.7"/>
<rect x="228.97" y="162" width="0.8" height="4" fill="#c0d0e0"/>
<text transform="translate(222.9,171.5) rotate(-45)" text-anchor="end" class="xl">4 AM</text>
<rect x="234.09" y="120.34" width="10.4" height="41.66" fill="#ff0000" stroke="#555" stroke-width="0.7"/>
<rect x="248.82" y="162" width="0.8" height="4" fill="#c0d0e0"/>
<text transform="translate(242.8,171.5) rotate(-45)" text-anchor="end" class="xl">5 AM</text>
<rect x="253.95" y="122.76" width="10.4" height="39.24" fill="#ff0000" stroke="#555" stroke-width="0.7"/>
<rect x="268.68" y="162" width="0.8" height="4" fill="#c0d0e0"/>
<text transform="translate(262.6,171.5) rotate(-45)" text-anchor="end" class="xl">6 AM</text>
<rect x="273.81" y="124.94" width="10.4" height="37.06" fill="#ff0000" stroke="#555" stroke-width="0.7"/>
<rect x="288.53" y="162" width="0.8" height="4" fill="#c0d0e0"/>
<text transform="translate(282.5,171.5) rotate(-45)" text-anchor="end" class="xl">7 AM</text>
<rect x="293.66" y="128.82" width="10.4" height="33.18" fill="#ff7e00" stroke="#555" stroke-width="0.7"/>
<rect x="308.39" y="162" width="0.8" height="4" fill="#c0d0e0"/>
<text transform="translate(302.4,171.5) rotate(-45)" text-anchor="end" class="xl">8 AM</text>
<rect x="313.52" y="132.45" width="10.4" height="29.55" fill="#ff7e00" stroke="#555" stroke-width="0.7"/>
<rect x="328.24" y="162" width="0.8" height="4" fill="#c0d0e0"/>
<text transform="translate(322.2,171.5) rotate(-45)" text-anchor="end" class="xl">9 AM</text>
<rect x="333.37" y="124.46" width="10.4" height="37.54" fill="#ff0000" stroke="#555" stroke-width="0.7"/>
<rect x="348.10" y="162" width="0.8" height="4" fill="#c0d0e0"/>
<text transform="translate(342.1,171.5) rotate(-45)" text-anchor="end" class="xl">10 AM</text>
<rect x="353.22" y="124.46" width="10.4" height="37.54" fill="#ff0000" stroke="#555" stroke-width="0.7"/>
<rect x="367.95" y="162" width="0.8" height="4" fill="#c0d0e0"/>
<text transform="translate(361.9,171.5) rotate(-45)" text-anchor="end" class="xl">11 AM</text>
<rect x="373.08" y="124.94" width="10.4" height="37.06" fill="#ff0000" stroke="#555" stroke-width="0.7"/>
<rect x="387.81" y="162" width="0.8" height="4" fill="#c0d0e0"/>
<text transform="translate(381.8,171.5) rotate(-45)" text-anchor="end" class="xl">12 PM</text>
<rect x="392.94" y="124.46" width="10.4" height="37.54" fill="#ff0000" stroke="#555" stroke-width="0.7"/>
<rect x="407.66" y="162" width="0.8" height="4" fill="#c0d0e0"/>
<text transform="translate(401.6,171.5) rotate(-45)" text-anchor="end" class="xl">1 PM</text>
<rect x="412.79" y="118.89" width="10.4" height="43.11" fill="#ff0000" stroke="#555" stroke-width="0.7"/>
<rect x="427.52" y="162" width="0.8" height="4" fill="#c0d0e0"/>
<text transform="translate(421.5,171.5) rotate(-45)" text-anchor="end" class="xl">2 PM</text>
<rect x="432.65" y="112.83" width="10.4" height="49.17" fill="#99004c" stroke="#555" stroke-width="0.7"/>
<rect x="447.37" y="162" width="0.8" height="4" fill="#c0d0e0"/>
<text transform="translate(441.3,171.5) rotate(-45)" text-anchor="end" class="xl">3 PM</text>
<rect x="452.50" y="100.24" width="10.4" height="61.76" fill="#99004c" stroke="#555" stroke-width="0.7"/>
<rect x="467.23" y="162" width="0.8" height="4" fill="#c0d0e0"/>
<text transform="translate(461.2,171.5) rotate(-45)" text-anchor="end" class="xl">4 PM</text>
<rect x="472.35" y="97.82" width="10.4" height="64.18" fill="#99004c" stroke="#555" stroke-width="0.7"/>
<rect x="487.08" y="162" width="0.8" height="4" fill="#c0d0e0"/>
<text transform="translate(481.1,171.5) rotate(-45)" text-anchor="end" class="xl">5 PM</text>
<rect x="492.21" y="93.46" width="10.4" height="68.54" fill="#99004c" stroke="#555" stroke-width="0.7"/>
<rect x="506.94" y="162" width="0.8" height="4" fill="#c0d0e0"/>
<text transform="translate(500.9,171.5) rotate(-45)" text-anchor="end" class="xl">6 PM</text>
<rect x="512.06" y="76.99" width="10.4" height="85.01" fill="#4c0026" stroke="#555" stroke-width="0.7"/>
<rect x="526.79" y="162" width="0.8" height="4" fill="#c0d0e0"/>
<text transform="translate(520.8,171.5) rotate(-45)" text-anchor="end" class="xl">7 PM</text>
<rect x="50.2" y="162" width="0.8" height="4" fill="#c0d0e0"/>
<text transform="translate(19.5,100) rotate(-90)" text-anchor="middle" class="ay">AQI</text>
<text x="267" y="16.30000000000001" text-anchor="middle" class="ct">Bishkek – PM2.5</text>
</svg>
</div>

<!-- conditions -->
<div class="abs" style="left:558px;top:370px;width:168px;height:210px;background:#efefef;border:1px solid #00467f"></div>
<div class="abs" style="left:558px;top:370px;width:168px;height:50px;background:#00467f;color:#fff;text-align:center;font-weight:bold">
 <div class="abs" style="left:0;width:168px;top:5.5px;font-size:10px;line-height:12px">Current Conditions</div>
 <div class="abs" style="left:0;width:168px;top:20px;font-size:8px;line-height:10px">observed at</div>
 <div class="abs" style="left:0;width:168px;top:33px;font-size:10px;line-height:12px">Dec 16, 2020 7:00 PM (LT)</div>
</div>
<div class="abs" style="left:558px;top:420px;width:168px;height:76px;background:#4c0026;color:#fff;text-align:center;font-weight:bold;font-size:13.33px;line-height:19px;padding-top:9.5px;border-left:1px solid #00467f;border-right:1px solid #00467f">351 AQI<br>Hazardous<br>PM2.5</div>
<div class="abs" style="left:558px;top:502.7px;width:168px;text-align:center;font-size:8px;font-weight:bold;line-height:11px;color:#222">Health Message</div>
<div class="abs" style="left:562px;top:517.5px;width:164px;font-size:8px;line-height:14.1px;color:#555;white-space:nowrap">AQI values over 300 trigger health warnings<br>of emergency conditions. The entire<br>population is even more likely to be affected<br>by serious health effects.</div>
</body></html>
